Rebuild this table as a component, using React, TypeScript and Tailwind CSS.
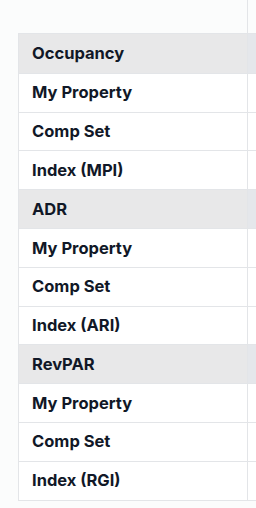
import React from "react";

type Row = { label: string; section?: boolean };

const rows: Row[] = [
  { label: "Occupancy", section: true },
  { label: "My Property" },
  { label: "Comp Set" },
  { label: "Index (MPI)" },
  { label: "ADR", section: true },
  { label: "My Property" },
  { label: "Comp Set" },
  { label: "Index (ARI)" },
  { label: "RevPAR", section: true },
  { label: "My Property" },
  { label: "Comp Set" },
  { label: "Index (RGI)" },
];

export default function App() {
  return (
    <div
      className="w-[256px] h-[508px] overflow-hidden bg-[#fbfcfc] pl-[18px]"
      style={{ fontFamily: "Inter, 'Noto Sans', sans-serif" }}
    >
      <div className="flex w-[260px]">
        {/* sticky label column */}
        <div className="w-[230px] shrink-0 flex flex-col">
          <div className="h-[33px] border-r border-[#e3e5e8]" />
          <div className="border border-[#e3e5e8] bg-white">
            {rows.map((r, i) => (
              <div
                key={i}
                className={`h-[38.8px] flex items-center pl-[13px] text-[16.5px] font-bold text-[#111827] ${
                  i > 0 ? "border-t border-[#e3e5e8]" : ""
                } ${r.section ? "bg-[#e8e8e9]" : "bg-white"}`}
              >
                {r.label}
              </div>
            ))}
          </div>
        </div>
        {/* next column, cut off */}
        <div className="flex-1 flex flex-col">
          <div className="h-[33px]" />
          <div className="border-y border-[#e3e5e8]">
            {rows.map((r, i) => (
              <div
                key={i}
                className={`h-[38.8px] ${i > 0 ? "border-t border-[#e3e5e8]" : ""} ${
                  r.section ? "bg-[#e5e7eb]" : "bg-white"
                }`}
              />
            ))}
          </div>
        </div>
      </div>
    </div>
  );
}
